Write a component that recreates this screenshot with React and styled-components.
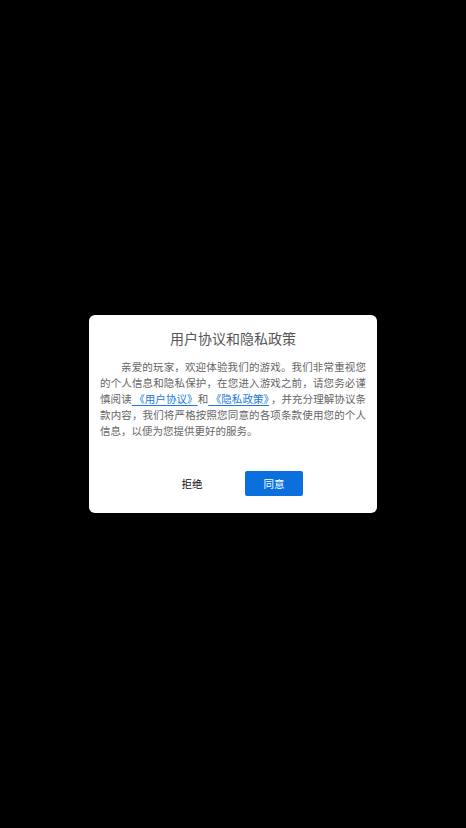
import React from "react";
import styled, { createGlobalStyle } from "styled-components";

const Global = createGlobalStyle`
  html, body { margin: 0; padding: 0; background: #000; }
  body { font-family: "Noto Sans CJK SC", "Noto Sans", sans-serif; }
`;

const Screen = styled.div`
  width: 466px;
  height: 828px;
  background: #000;
  display: flex;
  align-items: center;
  justify-content: center;
`;

const Dialog = styled.div`
  width: 288px;
  background: #fff;
  border-radius: 6px;
  padding: 13px 11px 17px;
  box-sizing: border-box;
  display: flex;
  flex-direction: column;
`;

const Title = styled.h2`
  margin: 0;
  font-size: 14px;
  line-height: 20px;
  font-weight: 400;
  color: #555;
  text-align: center;
`;

const Body = styled.p`
  margin: 11px 0 0;
  font-size: 10.5px;
  line-height: 16px;
  color: #666;
  text-indent: 2em;
  text-align: justify;
`;

const Link = styled.a`
  color: #1a78e0;
  text-decoration: underline;
  text-underline-offset: 2px;
  margin-right: ${(p) => (p.$tail ? "2px" : "0")};
`;

const Actions = styled.div`
  margin-top: 32px;
  display: flex;
  justify-content: center;
  gap: 24px;
`;

const Button = styled.button`
  width: 58px;
  height: 25px;
  border: none;
  border-radius: 2px;
  font-family: inherit;
  font-size: 10.5px;
  padding: 0;
  cursor: pointer;
  background: ${(p) => (p.$primary ? "#0b6fde" : "transparent")};
  color: ${(p) => (p.$primary ? "#fff" : "#111")};
`;

export default function App() {
  return (
    <>
      <Global />
      <Screen>
        <Dialog>
          <Title>用户协议和隐私政策</Title>
          <Body>
            亲爱的玩家，欢迎体验我们的游戏。我们非常重视您的个人信息和隐私保护，在您进入游戏之前，请您务必谨慎阅读
            <Link> 《用户协议》</Link>和<Link $tail> 《隐私政策》</Link>
            ，并充分理解协议条款内容，我们将严格按照您同意的各项条款使用您的个人信息，以便为您提供更好的服务。
          </Body>
          <Actions>
            <Button>拒绝</Button>
            <Button $primary>同意</Button>
          </Actions>
        </Dialog>
      </Screen>
    </>
  );
}
